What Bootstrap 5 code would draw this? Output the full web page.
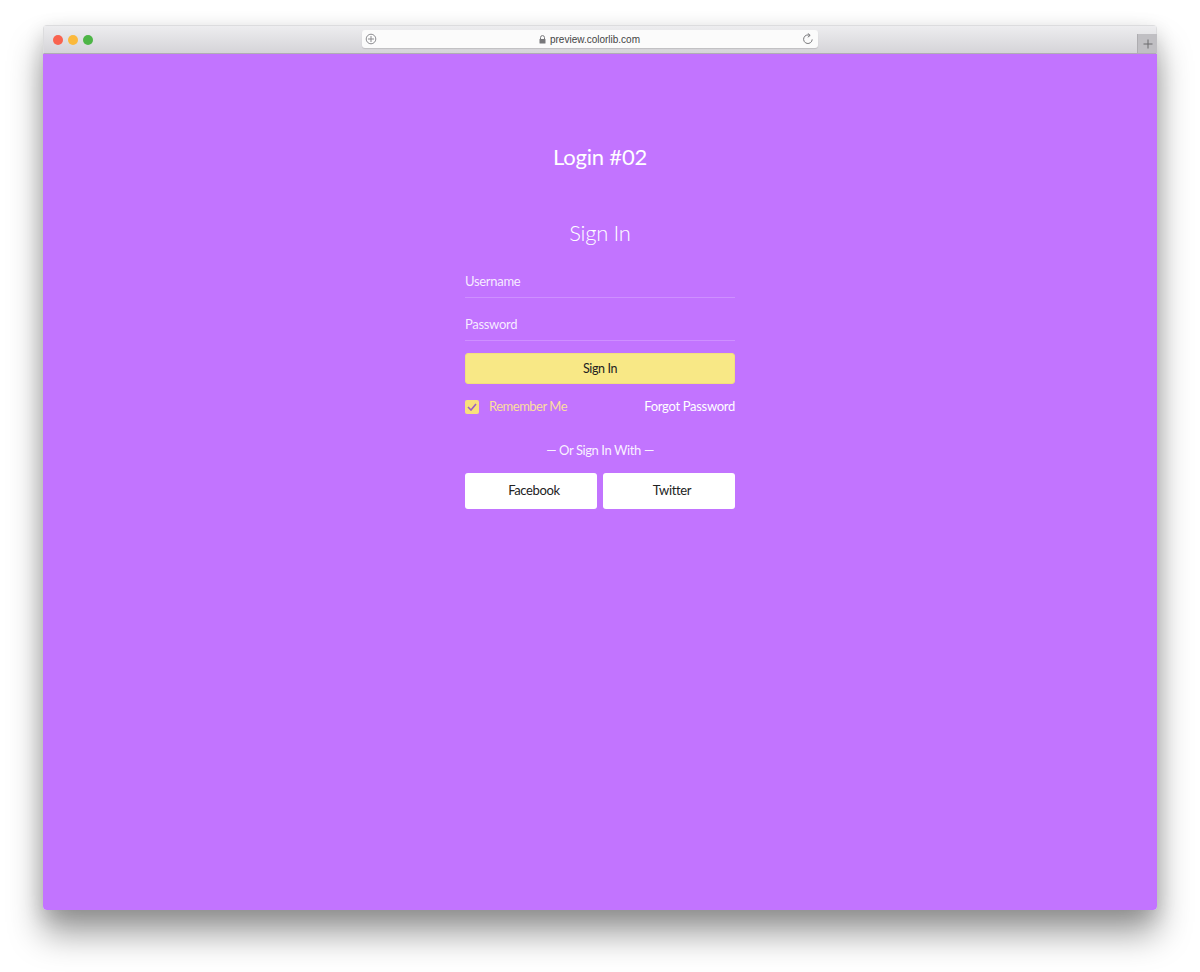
<!DOCTYPE html>
<html lang="en">
<head>
    <meta charset="UTF-8">
    <title>Login #02</title>
    <link href="https://cdn.jsdelivr.net/npm/bootstrap@5.3.3/dist/css/bootstrap.min.css" rel="stylesheet"/>
    <style>
        html, body { height: 972px; overflow: hidden; }
        body { background: #fff; font-family: Lato, "Liberation Sans", sans-serif; padding: 25px 43px 0; }
        .browser-win { height: 885px; border-radius: 4px; overflow: hidden; box-shadow: 0 24px 34px rgba(0,0,0,.38), 0 6px 20px rgba(0,0,0,.14); }
        .title-bar { height: 29px; background: linear-gradient(#ededef, #d5d4d8); border: 1px solid #dcdcde; border-width: 1px 1px 0; border-bottom: 1px solid #b0acb4; padding-left: 9px; }
        .dot { width: 10px; height: 10px; border-radius: 50%; margin-right: 5px; }
        .addr-bar { width: 456px; height: 18px; margin: 4px 0 0 264px; background: #fbfbfb; border-radius: 3px; padding: 0 4px 0 3px; font-family: "Liberation Sans", sans-serif; font-size: 10px; color: #444; box-shadow: 0 1px 1px rgba(0,0,0,.12); }
        .tab-add { width: 20px; height: 19px; margin-right: -1px; background: #c0bfc3; border-left: 1px solid #aeadb1; color: #666; }
        .page-area { height: 856px; background: #c274ff; padding-top: 90px; }
        .login-title { font-size: 22px; line-height: 26px; font-weight: 400; letter-spacing: -.2px; color: #fff; margin: 0 0 50px; }
        .login-box { width: 270px; }
        .signin-title { font-size: 22px; line-height: 26px; font-weight: 300; letter-spacing: -.3px; color: #fff; margin: 0 0 19px; }
        .line-input { display: block; width: 100%; height: 33px; padding: 0 0 1px; margin-bottom: 10px; background: transparent; border: 0; border-bottom: 1px solid rgba(255,255,255,.2); border-radius: 0; color: #fff; font-size: 13px; letter-spacing: -.3px; outline: 0; }
        .line-input::placeholder { color: rgba(255,255,255,.88); opacity: 1; }
        .btn-signin { height: 31px; padding: 1px 0 0; margin-top: 2px; background: #f8e886; border: 1px solid #f3df7d; border-radius: 3px; color: #222; font-size: 12.5px; letter-spacing: -.4px; }
        .remember-row { margin-top: 13px; }
        .check-box { width: 14px; height: 14px; background: #f8e07c; border-radius: 2px; margin-right: 10px; }
        .remember-text { color: #fbdda0; font-size: 13px; letter-spacing: -.5px; }
        .forgot-link { color: #fff; font-size: 13px; letter-spacing: -.3px; text-decoration: none; }
        .or-text { color: rgba(255,255,255,.92); font-size: 13px; letter-spacing: -.4px; line-height: 16px; margin: 25px 0 15px; }
        .social-row { gap: 6px; }
        .btn-social { flex: 1; height: 36px; padding: 0 0 0 6px; background: #fff; border: 0; border-radius: 3px; color: #222; font-size: 13px; letter-spacing: -.35px; }
    </style>
</head>
<body>
<div class="browser-win">
    <div class="title-bar d-flex position-relative">
        <div class="d-flex align-items-center" style="height:27px">
            <span class="dot" style="background:#f9634f"></span>
            <span class="dot" style="background:#fbb93c"></span>
            <span class="dot" style="background:#4db546"></span>
        </div>
        <div class="addr-bar d-flex align-items-center justify-content-between">
            <svg width="12" height="12" viewBox="0 0 12 12" fill="none" stroke="#8b8b8f" stroke-width="1"><circle cx="6" cy="6" r="4.8"/><path d="M6 3v6M3 6h6"/></svg>
            <span class="d-flex align-items-center gap-1">
                <svg width="7" height="9" viewBox="0 0 7 9"><path d="M1.5 4V2.6a2 2 0 0 1 4 0V4" fill="none" stroke="#77777a"/><rect x=".5" y="4" width="6" height="4.5" rx=".6" fill="#77777a"/></svg>
                preview.colorlib.com
            </span>
            <svg width="12" height="12" viewBox="0 0 12 12" fill="none" stroke="#77777a" stroke-width="1"><path d="M7.9 2.4A4.3 4.3 0 1 0 10.2 6.4"/><path d="M5.8 .4l2.4 2-2.4 1.8" /></svg>
        </div>
        <div class="tab-add position-absolute end-0 bottom-0 d-flex align-items-center justify-content-center">
            <svg width="10" height="10" viewBox="0 0 10 10" stroke="#6a6a6d" stroke-width="1"><path d="M5 .5v9M.5 5h9"/></svg>
        </div>
    </div>
    <div class="page-area">
        <h2 class="login-title text-center">Login #02</h2>
        <form class="login-box mx-auto" onsubmit="return false">
            <h3 class="signin-title text-center">Sign In</h3>
            <input type="text" class="line-input" placeholder="Username">
            <input type="password" class="line-input" placeholder="Password">
            <button type="submit" class="btn btn-signin w-100">Sign In</button>
            <div class="remember-row d-flex justify-content-between align-items-center">
                <label class="d-flex align-items-center">
                    <span class="check-box d-flex align-items-center justify-content-center">
                        <svg width="10" height="8" viewBox="0 0 10 8" fill="none" stroke="#9a5fc4" stroke-width="1.6"><path d="M1 4l3 3 5-6"/></svg>
                    </span>
                    <span class="remember-text">Remember Me</span>
                </label>
                <a href="#" class="forgot-link">Forgot Password</a>
            </div>
            <div class="or-text text-center">— Or Sign In With —</div>
            <div class="social-row d-flex">
                <button type="button" class="btn btn-social">Facebook</button>
                <button type="button" class="btn btn-social">Twitter</button>
            </div>
        </form>
    </div>
</div>
</body>
</html>
